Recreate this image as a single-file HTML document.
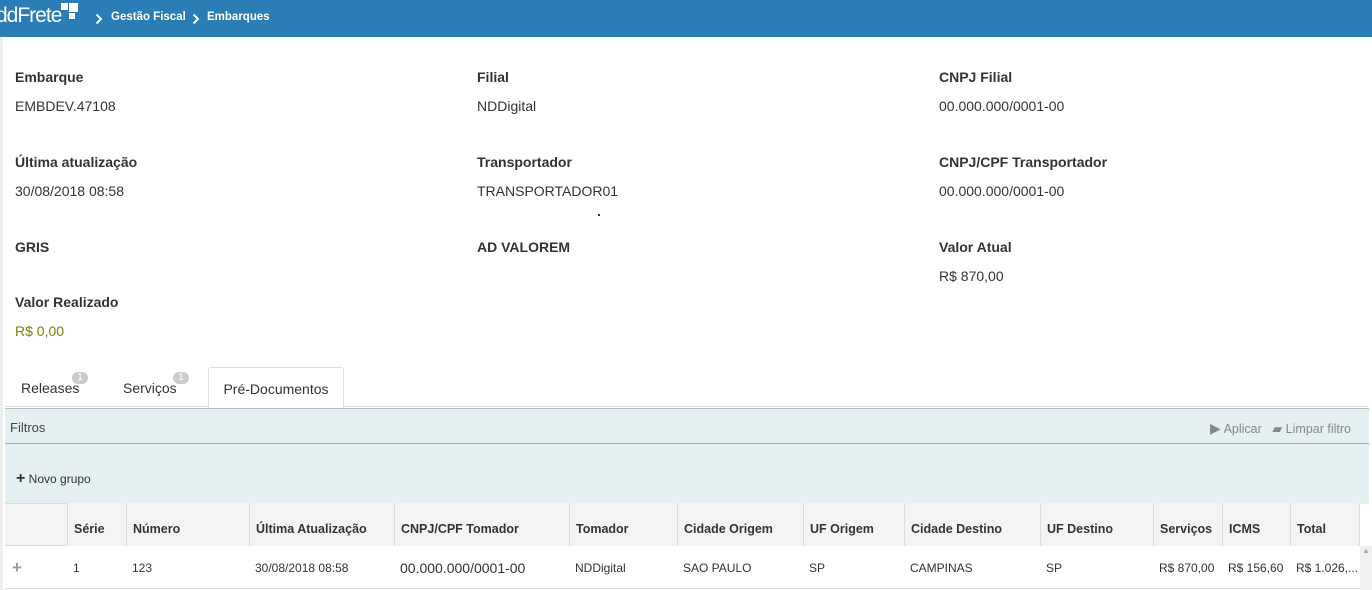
<!DOCTYPE html><html><head><style>
body{margin:0;width:1372px;height:590px;overflow:hidden;background:#fff;font-family:"Liberation Sans",sans-serif;color:#333;position:relative;font-size:14px}
.a{position:absolute;white-space:nowrap}
.h{background:#2a7db5;height:37px;width:1372px;top:0;left:0}
.l{font-weight:bold;font-size:14px;color:#333}
.v{font-size:14px;color:#333}
.th{position:absolute;top:503px;height:43px;line-height:53px;font-weight:bold;font-size:12.5px;border-left:1px solid #ddd;padding-left:6px;box-sizing:border-box;background:#f4f4f4}
.td{position:absolute;top:546px;height:43px;line-height:44px;font-size:12px;padding-left:6px;box-sizing:border-box}
</style></head><body>
<div class="a h"></div>
<div class="a" style="left:-4px;top:4px;color:#fff;font-size:21px;letter-spacing:-1px">ddFrete</div>
<div class="a" style="left:61px;top:3px;width:7px;height:7px;background:#fff"></div>
<div class="a" style="left:69px;top:3px;width:9px;height:9px;background:#fff"></div>
<div class="a" style="left:69px;top:13px;width:6px;height:6px;background:#fff"></div>
<svg class="a" style="left:95px;top:13px" width="8" height="12"><path d="M1.5 1.5 L6 6 L1.5 10.5" stroke="#fff" stroke-width="2" fill="none"/></svg>
<div class="a" style="left:111px;top:11px;color:#fff;font-weight:bold;font-size:11.5px">Gestão Fiscal</div>
<svg class="a" style="left:192px;top:13px" width="8" height="12"><path d="M1.5 1.5 L6 6 L1.5 10.5" stroke="#fff" stroke-width="2" fill="none"/></svg>
<div class="a" style="left:207px;top:11px;color:#fff;font-weight:bold;font-size:11.5px">Embarques</div>
<div class="a" style="left:0;top:37px;width:3px;height:553px;background:#eee"></div>
<div class="a l" style="left:15px;top:69px">Embarque</div><div class="a v" style="left:15px;top:98px">EMBDEV.47108</div>
<div class="a l" style="left:477px;top:69px">Filial</div><div class="a v" style="left:477px;top:98px">NDDigital</div>
<div class="a l" style="left:939px;top:69px">CNPJ Filial</div><div class="a v" style="left:939px;top:98px">00.000.000/0001-00</div>
<div class="a l" style="left:15px;top:154px">Última atualização</div><div class="a v" style="left:15px;top:183px">30/08/2018 08:58</div>
<div class="a l" style="left:477px;top:154px">Transportador</div><div class="a v" style="left:477px;top:183px">TRANSPORTADOR01</div>
<div class="a" style="left:598px;top:214px;width:2px;height:2px;background:#333"></div>
<div class="a l" style="left:939px;top:154px">CNPJ/CPF Transportador</div><div class="a v" style="left:939px;top:183px">00.000.000/0001-00</div>
<div class="a l" style="left:15px;top:239px">GRIS</div>
<div class="a l" style="left:477px;top:239px">AD VALOREM</div>
<div class="a l" style="left:939px;top:239px">Valor Atual</div><div class="a v" style="left:939px;top:268px">R$ 870,00</div>
<div class="a l" style="left:15px;top:294px">Valor Realizado</div><div class="a v" style="left:15px;top:323px;color:#6a8a00">R$ 0,00</div>
<div class="a" style="left:5px;top:406px;width:1364px;height:1px;background:#ddd"></div>
<div class="a" style="left:21px;top:380px">Releases</div><div class="a" style="left:72px;top:372px;width:16px;height:12px;border-radius:6px;background:#ccc;color:#fff;font-size:10px;text-align:center;line-height:12px">1</div>
<div class="a" style="left:123px;top:380px">Serviços</div><div class="a" style="left:173px;top:372px;width:16px;height:12px;border-radius:6px;background:#ccc;color:#fff;font-size:10px;text-align:center;line-height:12px">1</div>
<div class="a" style="left:208px;top:367px;width:134px;height:40px;border:1px solid #ddd;border-bottom:none;background:#fff;border-radius:3px 3px 0 0;text-align:center;line-height:42px">Pré-Documentos</div>
<div class="a" style="left:5px;top:408px;width:1364px;height:95px;background:#e4f0f1;border-top:1px solid #bbb"></div>
<div class="a" style="left:5px;top:443px;width:1364px;height:1px;background:#aaa"></div>
<div class="a" style="left:10px;top:420px;font-size:13px;color:#444">Filtros</div>
<div class="a" style="left:1210px;top:420px;font-size:12.5px;color:#888"><span style="font-size:14px">▶</span> Aplicar &nbsp; <span style="font-size:13px">▰</span> Limpar filtro</div>
<div class="a" style="left:16px;top:470px;font-size:12px;color:#333"><b style="font-size:16px">+</b> Novo grupo</div>
<div class="a" style="left:5px;top:503px;width:1355px;height:43px;background:#f4f4f4;border-top:1px solid #ddd;border-bottom:1px solid #ddd;box-sizing:border-box"></div>
<div class="th" style="left:67px;width:59px">Série</div>
<div class="th" style="left:126px;width:123px">Número</div>
<div class="th" style="left:249px;width:145px">Última Atualização</div>
<div class="th" style="left:394px;width:175px">CNPJ/CPF Tomador</div>
<div class="th" style="left:569px;width:108px">Tomador</div>
<div class="th" style="left:677px;width:126px">Cidade Origem</div>
<div class="th" style="left:803px;width:101px">UF Origem</div>
<div class="th" style="left:904px;width:136px">Cidade Destino</div>
<div class="th" style="left:1040px;width:113px">UF Destino</div>
<div class="th" style="left:1153px;width:69px">Serviços</div>
<div class="th" style="left:1222px;width:68px">ICMS</div>
<div class="th" style="left:1290px;width:70px;border-right:1px solid #ddd">Total</div>
<div class="td" style="left:6px;color:#999;font-size:17px;font-weight:bold">+</div>
<div class="td" style="left:67px">1</div>
<div class="td" style="left:126px">123</div>
<div class="td" style="left:249px">30/08/2018 08:58</div>
<div class="td" style="left:394px;font-size:14px">00.000.000/0001-00</div>
<div class="td" style="left:569px">NDDigital</div>
<div class="td" style="left:677px">SAO PAULO</div>
<div class="td" style="left:803px">SP</div>
<div class="td" style="left:904px">CAMPINAS</div>
<div class="td" style="left:1040px">SP</div>
<div class="td" style="left:1153px">R$ 870,00</div>
<div class="td" style="left:1222px">R$ 156,60</div>
<div class="td" style="left:1290px">R$ 1.026,...</div>
<div class="a" style="left:5px;top:588px;width:1355px;height:1px;background:#ddd"></div>
<div class="a" style="left:1360px;top:546px;width:12px;height:44px;background:#f0f0f0;color:#aaa;font-size:8px;text-align:center">▲</div>
</body></html>
